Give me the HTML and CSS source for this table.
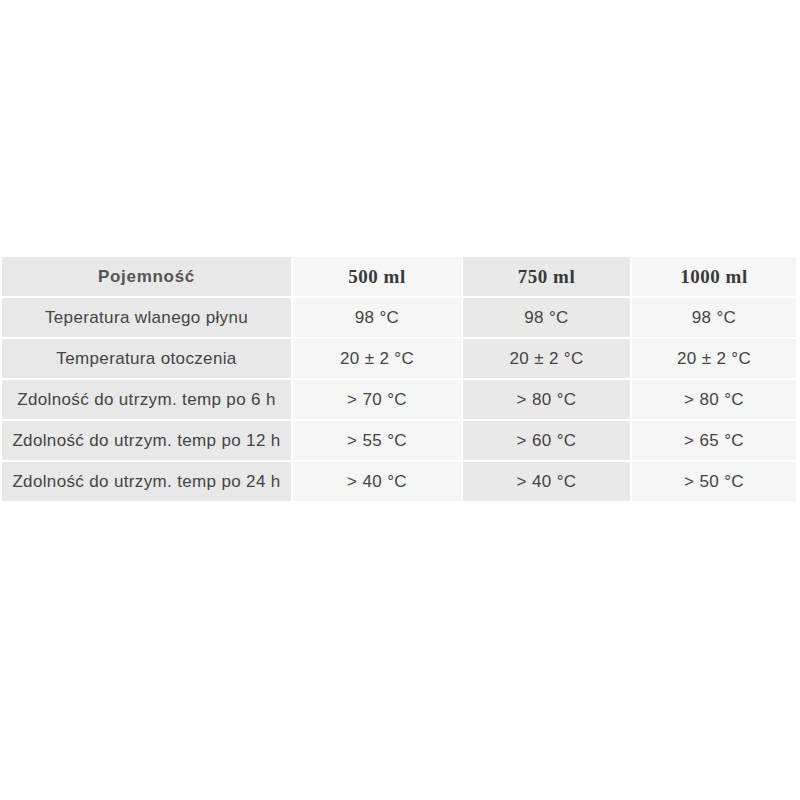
FILE: index.html
```html
<!DOCTYPE html>
<html lang="pl">
<head>
<meta charset="utf-8">
<title>Pojemność</title>
<link rel="stylesheet" href="styles.css">
</head>
<body>
<table class="spec">
  <colgroup>
    <col class="c1"><col class="c2"><col class="c3"><col class="c4">
  </colgroup>
  <tr class="head">
    <th class="label">Pojemność</th>
    <th class="light">500 ml</th>
    <th class="dark">750 ml</th>
    <th class="light">1000 ml</th>
  </tr>
  <tr>
    <td class="label">Teperatura wlanego płynu</td>
    <td class="light">98 °C</td>
    <td class="dark">98 °C</td>
    <td class="light">98 °C</td>
  </tr>
  <tr>
    <td class="label">Temperatura otoczenia</td>
    <td class="light">20 ± 2 °C</td>
    <td class="dark">20 ± 2 °C</td>
    <td class="light">20 ± 2 °C</td>
  </tr>
  <tr>
    <td class="label">Zdolność do utrzym. temp po 6 h</td>
    <td class="light">&gt; 70 °C</td>
    <td class="dark">&gt; 80 °C</td>
    <td class="light">&gt; 80 °C</td>
  </tr>
  <tr>
    <td class="label">Zdolność do utrzym. temp po 12 h</td>
    <td class="light">&gt; 55 °C</td>
    <td class="dark">&gt; 60 °C</td>
    <td class="light">&gt; 65 °C</td>
  </tr>
  <tr>
    <td class="label">Zdolność do utrzym. temp po 24 h</td>
    <td class="light">&gt; 40 °C</td>
    <td class="dark">&gt; 40 °C</td>
    <td class="light">&gt; 50 °C</td>
  </tr>
</table>
</body>
</html>
```
FILE: styles.css
```css
html, body {
  margin: 0;
  padding: 0;
  background: #ffffff;
}
body {
  padding-top: 255px;
  font-family: "Liberation Sans", Arial, sans-serif;
  color: #444444;
}
.spec {
  border-collapse: separate;
  border-spacing: 2px;
  table-layout: fixed;
  width: 798px;
}
.c1 { width: 289px; }
.c2 { width: 168px; }
.c3 { width: 167px; }
.c4 { width: 164px; }
.spec th,
.spec td {
  height: 39px;
  padding: 0;
  text-align: center;
  vertical-align: middle;
  font-size: 17px;
  letter-spacing: 0.35px;
  font-weight: normal;
  white-space: nowrap;
}
.spec .label { background: #e8e8e8; }
.spec .light { background: #f6f6f6; }
.spec .dark { background: #e9e9e9; }
.head th {
  font-family: "Liberation Serif", "Times New Roman", serif;
  font-weight: bold;
  font-size: 19px;
  letter-spacing: 0.5px;
  color: #3a3a3a;
}
.head th.label {
  font-family: "Liberation Sans", Arial, sans-serif;
  font-size: 17px;
  letter-spacing: 0.7px;
  color: #555555;
}
```
